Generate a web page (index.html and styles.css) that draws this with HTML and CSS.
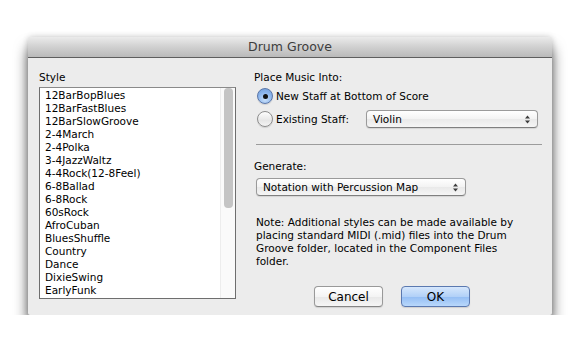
FILE: index.html
```html
<!DOCTYPE html>
<html lang="en">
<head>
  <meta charset="UTF-8" />
  <title>Drum Groove</title>
  <link rel="stylesheet" href="styles.css">
</head>
<body>

  <div class="window">
    <div class="titlebar">Drum Groove</div>

    <div class="content">
      <!-- Style list -->
      <div class="style-col">
        <div class="label">Style</div>
        <div class="listbox">
          <ul class="style-list">
            <li>12BarBopBlues</li>
            <li>12BarFastBlues</li>
            <li>12BarSlowGroove</li>
            <li>2-4March</li>
            <li>2-4Polka</li>
            <li>3-4JazzWaltz</li>
            <li>4-4Rock(12-8Feel)</li>
            <li>6-8Ballad</li>
            <li>6-8Rock</li>
            <li>60sRock</li>
            <li>AfroCuban</li>
            <li>BluesShuffle</li>
            <li>Country</li>
            <li>Dance</li>
            <li>DixieSwing</li>
            <li>EarlyFunk</li>
          </ul>
          <div class="scrollbar"><div class="thumb"></div></div>
        </div>
      </div>

      <!-- Options -->
      <div class="options-col">
        <div class="label">Place Music Into:</div>

        <div class="radio-row first">
          <span class="radio checked"></span>
          <span>New Staff at Bottom of Score</span>
        </div>

        <div class="radio-row">
          <span class="radio"></span>
          <span class="radio-text">Existing Staff:</span>
          <div class="popup staff-popup">
            <span>Violin</span>
            <svg class="arrows" width="7" height="9" viewBox="0 0 7 9"><path d="M3.5 0.5 L6 3.5 H1 Z M3.5 8.5 L6 5.5 H1 Z" fill="#3c3c3c"/></svg>
          </div>
        </div>

        <div class="separator"></div>

        <div class="label">Generate:</div>
        <div class="popup generate-popup">
          <span>Notation with Percussion Map</span>
          <svg class="arrows" width="7" height="9" viewBox="0 0 7 9"><path d="M3.5 0.5 L6 3.5 H1 Z M3.5 8.5 L6 5.5 H1 Z" fill="#3c3c3c"/></svg>
        </div>

        <p class="note">Note: Additional styles can be made available by placing standard MIDI (.mid) files into the Drum Groove folder, located in the Component Files folder.</p>

        <div class="buttons">
          <button class="btn">Cancel</button>
          <button class="btn default">OK</button>
        </div>
      </div>
    </div>
  </div>

</body>
</html>
```

FILE: styles.css
```css
*, *::before, *::after {
  box-sizing: border-box;
}

body, html {
  margin: 0;
  padding: 0;
  background: #fff;
  font-family: 'DejaVu Sans', sans-serif;
  font-size: 10.5px;
  color: #000;
}

body {
  padding: 37px 0 0 28px;
}

.window {
  width: 524px;
  height: 278px;
  background: #ececec;
  border-radius: 4px 4px 2px 2px;
  box-shadow: 0 11px 14px rgba(0, 0, 0, 0.65), 0 0 6px rgba(0, 0, 0, 0.2);
  display: flex;
  flex-direction: column;
}

.titlebar {
  height: 21px;
  border-bottom: 1px solid #5e5e5e;
  border-radius: 4px 4px 0 0;
  background: linear-gradient(#ebebeb, #d0d0d0 50%, #bababa);
  text-align: center;
  font-size: 12.5px;
  line-height: 20px;
  color: #3d3d3d;
}

.content {
  display: flex;
  gap: 18px;
  padding: 13px 10px 0 11px;
}

.label {
  line-height: 13px;
}

/* list */

.style-col {
  width: 197px;
  display: flex;
  flex-direction: column;
}

.listbox {
  margin-top: 3px;
  height: 212px;
  border: 1px solid #6e6e6e;
  border-top-color: #8a8a8a;
  background: #fff;
  display: flex;
}

.style-list {
  list-style: none;
  flex: 1;
  margin: 0;
  padding: 1px 0 0 5px;
  overflow: hidden;
}

.style-list li {
  line-height: 13px;
  white-space: nowrap;
}

.scrollbar {
  width: 15px;
  border-left: 1px solid #ededed;
  background: #fafafa;
  padding: 0 2px 0 3px;
}

.thumb {
  height: 120px;
  border-radius: 4px;
  background: #c4c4c4;
}

/* options */

.options-col {
  flex: 1;
  display: flex;
  flex-direction: column;
}

.radio-row {
  display: flex;
  align-items: center;
  height: 18px;
  margin-top: 6px;
}

.radio-row.first {
  height: 16px;
  margin-top: 4px;
}

.radio {
  width: 16px;
  height: 16px;
  margin: 0 3px 0 3px;
  border-radius: 50%;
  border: 1px solid #8d8d8d;
  background: linear-gradient(#fdfdfd, #e6e6e6 60%, #f4f4f4);
  box-shadow: 0 1px 1px rgba(0, 0, 0, 0.12);
  display: flex;
  align-items: center;
  justify-content: center;
}

.radio.checked {
  border-color: #5a76a8;
  background: radial-gradient(circle at 50% 75%, #c9e0fa, #8cb5ec 55%, #6e9bd8);
}

.radio.checked::after {
  content: "";
  width: 5px;
  height: 5px;
  border-radius: 50%;
  background: #111;
}

.radio-text {
  width: 90px;
}

.popup {
  height: 18px;
  border: 1px solid #9a9a9a;
  border-bottom-color: #7f7f7f;
  border-radius: 4px;
  background: linear-gradient(#ffffff, #f3f3f3 50%, #e9e9e9 51%, #f5f5f5);
  box-shadow: 0 1px 1px rgba(0, 0, 0, 0.1);
  display: flex;
  align-items: center;
  justify-content: space-between;
  padding: 0 6px 0 6px;
}

.staff-popup {
  width: 172px;
}

.generate-popup {
  width: 210px;
  margin: 5px 0 0 2px;
}

.arrows {
  display: block;
}

.separator {
  height: 1px;
  background: #9c9c9c;
  margin: 16px 0 15px 2px;
}

.note {
  width: 276px;
  margin: 20px 0 0 2px;
  line-height: 13px;
}

.buttons {
  display: flex;
  gap: 18px;
  margin: 18px 0 0 60px;
}

.btn {
  width: 69px;
  height: 21px;
  border: 1px solid #999;
  border-bottom-color: #858585;
  border-radius: 4px;
  background: linear-gradient(#ffffff, #f4f4f4 50%, #e8e8e8 51%, #f6f6f6);
  box-shadow: 0 1px 1px rgba(0, 0, 0, 0.12);
  font-family: 'DejaVu Sans', sans-serif;
  font-size: 12px;
  color: #000;
  padding: 0;
}

.btn.default {
  border-color: #5b79b0;
  background: linear-gradient(#d6e7fc, #b2d1f8 50%, #93bdf4 51%, #b9d8fb);
}
```
